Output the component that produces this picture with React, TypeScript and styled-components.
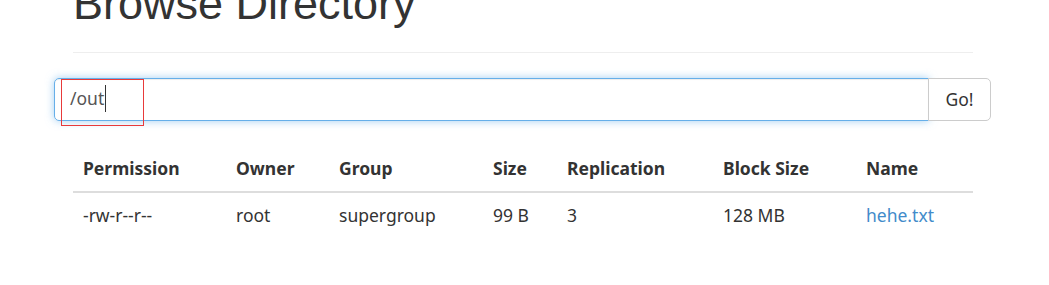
import React from "react";
import styled, { createGlobalStyle } from "styled-components";

const Global = createGlobalStyle`
  html, body { margin: 0; padding: 0; background: #fff; }
  body { font-family: "Noto Sans", "Open Sans", sans-serif; color: #333; }
`;

const Container = styled.div`
  width: 900px;
  margin-left: 73px;
  padding-top: 1px;
`;

const PageHeader = styled.div`
  padding-bottom: 11px;
  border-bottom: 1px solid #eee;
  margin-top: -22px;
`;

const Title = styled.h1`
  margin: 0 0 12px 0;
  font-family: "Liberation Sans", Arial, sans-serif;
  font-weight: 400;
  font-size: 45px;
  line-height: 1.1;
  color: #333;
`;

const SearchRow = styled.div`
  position: relative;
  margin: 25px 0 0 -19px;
  width: 937px;
`;

const InputGroup = styled.div`
  display: flex;
  height: 43px;
`;

const Field = styled.div`
  flex: 1;
  display: flex;
  align-items: center;
  box-sizing: border-box;
  padding: 0 15px 2px;
  border: 1px solid #66afe9;
  border-radius: 5px 0 0 5px;
  box-shadow: inset 0 1px 1px rgba(0, 0, 0, 0.075), 0 0 8px rgba(102, 175, 233, 0.6);
  font-size: 17.5px;
  color: #555;
`;

const Caret = styled.span`
  display: inline-block;
  width: 1px;
  height: 27px;
  background: #333;
  margin-left: 1px;
`;

const GoButton = styled.button`
  box-sizing: border-box;
  width: 63px;
  margin-left: -1px;
  border: 1px solid #ccc;
  border-radius: 0 5px 5px 0;
  background: #fff;
  color: #333;
  font-family: "Noto Sans", sans-serif;
  font-size: 17.5px;
  padding: 0;
`;

const Annotation = styled.span`
  position: absolute;
  z-index: 2;
  left: 7px;
  top: 1px;
  width: 83px;
  height: 47px;
  border: 1px solid red;
  border-color: #e83a3a;
  box-sizing: border-box;
  pointer-events: none;
`;

const Table = styled.table`
  width: 900px;
  margin-top: 25px;
  border-collapse: collapse;
  table-layout: fixed;
  font-size: 17.5px;
`;

const Th = styled.th<{ $w: number }>`
  width: ${(p) => p.$w - 20}px;
  text-align: left;
  font-weight: 700;
  padding: 10px;
  line-height: 25px;
  border-bottom: 2px solid #ddd;
  color: #333;
`;

const Td = styled.td`
  padding: 10px;
  line-height: 25px;
  color: #333;
`;

const Link = styled.a`
  color: #428bca;
  text-decoration: none;
`;

const cols: [string, number][] = [
  ["Permission", 153],
  ["Owner", 103],
  ["Group", 154],
  ["Size", 74],
  ["Replication", 156],
  ["Block Size", 143],
  ["Name", 117],
];

export default function App() {
  return (
    <>
      <Global />
      <Container>
        <PageHeader>
          <Title>Browse Directory</Title>
        </PageHeader>
        <SearchRow>
          <InputGroup>
            <Field>
              /out
              <Caret />
            </Field>
            <GoButton>Go!</GoButton>
          </InputGroup>
          <Annotation />
        </SearchRow>
        <Table>
          <thead>
            <tr>
              {cols.map(([c, w]) => (
                <Th key={c} $w={w}>
                  {c}
                </Th>
              ))}
            </tr>
          </thead>
          <tbody>
            <tr>
              <Td>-rw-r--r--</Td>
              <Td>root</Td>
              <Td>supergroup</Td>
              <Td>99 B</Td>
              <Td>3</Td>
              <Td>128 MB</Td>
              <Td>
                <Link href="#">hehe.txt</Link>
              </Td>
            </tr>
          </tbody>
        </Table>
      </Container>
    </>
  );
}
